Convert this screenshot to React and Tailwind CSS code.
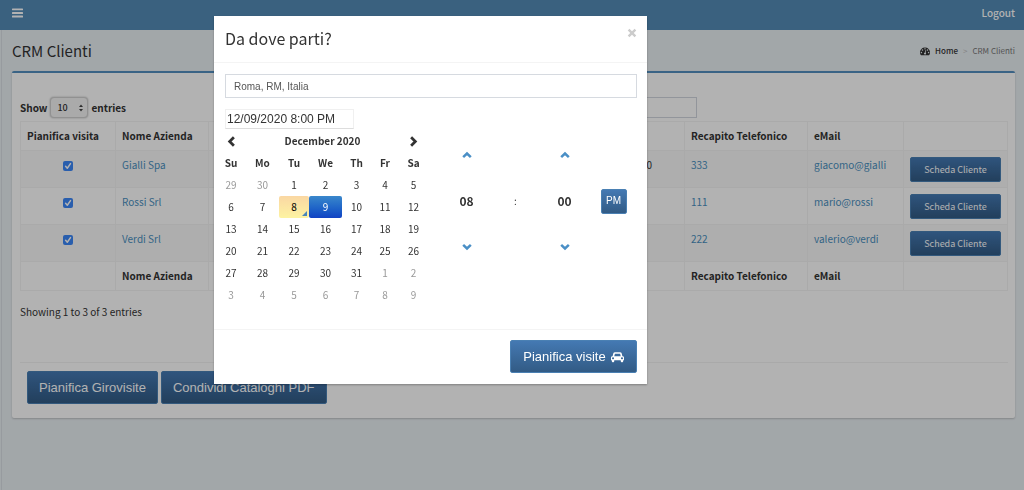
import React from "react";

const primary =
  "inline-flex items-center justify-center border border-[#4a80b3] bg-linear-to-b from-[#4479b3] to-[#325b85] text-white";

const clients = [
  { name: "Gialli Spa", extra: "0", phone: "333", email: "giacomo@gialli" },
  { name: "Rossi Srl", extra: "", phone: "111", email: "mario@rossi" },
  { name: "Verdi Srl", extra: "", phone: "222", email: "valerio@verdi" },
];

const weekDays = ["Su", "Mo", "Tu", "We", "Th", "Fr", "Sa"];

const weeks = [
  [29, 30, 1, 2, 3, 4, 5],
  [6, 7, 8, 9, 10, 11, 12],
  [13, 14, 15, 16, 17, 18, 19],
  [20, 21, 22, 23, 24, 25, 26],
  [27, 28, 29, 30, 31, 1, 2],
  [3, 4, 5, 6, 7, 8, 9],
];

function BarsIcon() {
  return (
    <svg viewBox="0 0 11 10" className="h-[10px] w-[11px]" fill="currentColor" aria-hidden="true">
      <rect x="0" y="0.4" width="11" height="1.9" rx="0.5" />
      <rect x="0" y="4" width="11" height="1.9" rx="0.5" />
      <rect x="0" y="7.6" width="11" height="1.9" rx="0.5" />
    </svg>
  );
}

function DashboardIcon() {
  return (
    <svg viewBox="0 0 1792 1792" className="size-[10px]" fill="currentColor" aria-hidden="true">
      <path d="M384 1152q0-53-37.5-90.5t-90.5-37.5-90.5 37.5-37.5 90.5 37.5 90.5 90.5 37.5 90.5-37.5 37.5-90.5zm192-448q0-53-37.5-90.5t-90.5-37.5-90.5 37.5-37.5 90.5 37.5 90.5 90.5 37.5 90.5-37.5 37.5-90.5zm428 481l101-382q6-26-7.5-48.5t-38.5-29.5-48 6.5-30 39.5l-101 382q-60 5-107 43.5t-63 98.5q-20 77 20 146t117 89 146-20 89-117q16-60-6-117t-72-91zm660-33q0-53-37.5-90.5t-90.5-37.5-90.5 37.5-37.5 90.5 37.5 90.5 90.5 37.5 90.5-37.5 37.5-90.5zm-640-640q0-53-37.5-90.5t-90.5-37.5-90.5 37.5-37.5 90.5 37.5 90.5 90.5 37.5 90.5-37.5 37.5-90.5zm448 192q0-53-37.5-90.5t-90.5-37.5-90.5 37.5-37.5 90.5 37.5 90.5 90.5 37.5 90.5-37.5 37.5-90.5zm320 448q0 261-141 483-19 29-54 29h-1402q-35 0-54-29-141-221-141-483 0-182 71-348t191-286 286-191 348-71 348 71 286 191 191 286 71 348z" />
    </svg>
  );
}

function CarIcon() {
  return (
    <svg viewBox="0 0 2048 1792" className="h-[12px] w-[13px]" fill="currentColor" aria-hidden="true">
      <path d="M480 1088q0-66-47-113t-113-47-113 47-47 113 47 113 113 47 113-47 47-113zm36-320h1016l-89-357q-2-8-14-17.5t-21-9.5h-768q-9 0-21 9.5t-14 17.5zm1372 320q0-66-47-113t-113-47-113 47-47 113 47 113 113 47 113-47 47-113zm160-96v384q0 14-9 23t-23 9h-96v128q0 80-56 136t-136 56-136-56-56-136v-128h-1024v128q0 80-56 136t-136 56-136-56-56-136v-128h-96q-14 0-23-9t-9-23v-384q0-93 65.5-158.5t158.5-65.5h28l105-419q23-94 104-157.5t179-63.5h768q98 0 179 63.5t104 157.5l105 419h28q93 0 158.5 65.5t65.5 158.5z" />
    </svg>
  );
}

function Chevron({ points, className }) {
  return (
    <svg viewBox="0 0 12 12" className={className} fill="none" stroke="currentColor" aria-hidden="true">
      <polyline points={points} strokeWidth="3" />
    </svg>
  );
}

function Check({ label }) {
  return (
    <span className="mt-[4px] inline-grid size-[10px] align-top">
      <input
        type="checkbox"
        defaultChecked
        aria-label={label}
        className="col-start-1 row-start-1 size-[10px] appearance-none rounded-xs bg-[#3c87f8]"
      />
      <svg viewBox="0 0 10 10" className="pointer-events-none col-start-1 row-start-1 size-[10px]" fill="none" stroke="white" aria-hidden="true">
        <path d="M2.6 5.3 4.3 7.2 7.5 2.6" strokeWidth="1.5" strokeLinecap="round" strokeLinejoin="round" />
      </svg>
    </span>
  );
}

function HeadingRow({ first }) {
  const cell = "border border-[#f4f4f4] px-[6px] py-0 text-left font-bold whitespace-nowrap";
  return (
    <tr className="h-[29px]">
      <th className={cell}>{first}</th>
      <th className={cell}>Nome Azienda</th>
      <th className={cell}></th>
      <th className={cell}>Recapito Telefonico</th>
      <th className={cell}>eMail</th>
      <th className={cell}></th>
    </tr>
  );
}

function ClientsTable() {
  const cell = "border border-[#f4f4f4] px-[6px] pt-[6px] pb-0 align-top";
  return (
    <table className="w-full table-fixed border-collapse">
      <colgroup>
        <col className="w-[95px]" />
        <col className="w-[93px]" />
        <col />
        <col className="w-[123px]" />
        <col className="w-[96px]" />
        <col className="w-[104px]" />
      </colgroup>
      <thead>
        <HeadingRow first="Pianifica visita" />
      </thead>
      <tbody>
        {clients.map((c) => (
          <tr key={c.name} className="h-[37px] odd:bg-[#f9f9f9]">
            <td className={`${cell} text-center`}>
              <Check label={`Pianifica visita ${c.name}`} />
            </td>
            <td className={cell}>
              <a href="#" className="text-[#4a8fc0]">{c.name}</a>
            </td>
            <td className="border border-[#f4f4f4] pt-[6px] pr-[32px] text-right align-top">{c.extra}</td>
            <td className={cell}>
              <a href="#" className="text-[#4a8fc0]">{c.phone}</a>
            </td>
            <td className={cell}>
              <a href="#" className="text-[#4a8fc0]">{c.email}</a>
            </td>
            <td className={cell}>
              <button type="button" className={`${primary} h-[25px] w-full rounded-xs text-[9px]`}>
                Scheda Cliente
              </button>
            </td>
          </tr>
        ))}
      </tbody>
      <tfoot>
        <HeadingRow first="" />
      </tfoot>
    </table>
  );
}

function dayClass(week, day) {
  if (week === 1 && day === 8)
    return "relative rounded-xs bg-linear-to-b from-[#fad7a3] to-[#fdf3a2] text-black";
  if (week === 1 && day === 9)
    return "rounded-xs bg-linear-to-b from-[#3a87cb] to-[#1242c4] text-white";
  if ((week === 0 && day > 20) || (week > 3 && day < 10)) return "text-[#999999]";
  return "";
}

function Calendar() {
  return (
    <table className="w-[212px] table-fixed border-separate border-spacing-0 text-center">
      <colgroup>
        <col className="w-[30px]" />
        <col className="w-[33px]" />
        <col className="w-[30px]" />
        <col className="w-[33px]" />
        <col className="w-[29px]" />
        <col className="w-[28px]" />
        <col className="w-[29px]" />
      </colgroup>
      <thead>
        <tr className="h-[22px]">
          <th className="p-0">
            <button type="button" aria-label="Previous month" className="block w-full">
              <Chevron points="8.6,1.4 4,6 8.6,10.6" className="mx-auto size-[11px]" />
            </button>
          </th>
          <th colSpan={5} className="p-0 font-bold">December 2020</th>
          <th className="p-0">
            <button type="button" aria-label="Next month" className="block w-full">
              <Chevron points="3.4,1.4 8,6 3.4,10.6" className="mx-auto size-[11px]" />
            </button>
          </th>
        </tr>
        <tr className="h-[22px]">
          {weekDays.map((d) => (
            <th key={d} className="p-0 font-bold">{d}</th>
          ))}
        </tr>
      </thead>
      <tbody>
        {weeks.map((days, w) => (
          <tr key={w} className="h-[22px]">
            {days.map((d) => (
              <td key={d} className={`p-0 ${dayClass(w, d)}`}>
                {d}
                {w === 1 && d === 8 && (
                  <span className="absolute right-[2px] bottom-[2px] border-b-[5px] border-l-[5px] border-b-[#4a86bb] border-l-transparent" />
                )}
              </td>
            ))}
          </tr>
        ))}
      </tbody>
    </table>
  );
}

function Arrow({ up, label }) {
  return (
    <button type="button" aria-label={label} className="text-[#4a8fc6]">
      <Chevron points={up ? "1.4,8.6 6,4.2 10.6,8.6" : "1.4,3.4 6,7.8 10.6,3.4"} className="size-[10px]" />
    </button>
  );
}

function TimePicker() {
  return (
    <div className="grid grid-cols-[repeat(4,49px)] grid-rows-[repeat(3,46px)] place-items-center pt-[2px]">
      <Arrow up label="Increment hour" />
      <span />
      <Arrow up label="Increment minute" />
      <span />
      <span className="text-[12px] font-bold">08</span>
      <span>:</span>
      <span className="text-[12px] font-bold">00</span>
      <button type="button" className={`${primary} h-[25px] w-[26px] rounded-xs font-['Liberation_Sans',sans-serif]`}>
        PM
      </button>
      <Arrow label="Decrement hour" />
      <span />
      <Arrow label="Decrement minute" />
      <span />
    </div>
  );
}

function Modal() {
  return (
    <div className="fixed inset-0 flex items-start bg-black/30 pt-[16px] pl-[214px]">
      <div role="dialog" aria-labelledby="dialog-title" className="w-full max-w-[433px] bg-white shadow-[0_1px_2px_rgba(0,0,0,0.3)]">
        <div className="flex h-[47px] items-start justify-between border-b border-[#f4f4f4] pr-[10px] pl-[11px]">
          <h4 id="dialog-title" className="pt-[10px] text-[16px] leading-[24px]">Da dove parti?</h4>
          <button type="button" aria-label="Close" className="mt-[12px] text-[#cccccc]">
            <svg viewBox="0 0 10 10" className="size-[10px]" stroke="currentColor" strokeWidth="2.4" aria-hidden="true">
              <path d="M1.6 1.6 8.4 8.4M8.4 1.6 1.6 8.4" />
            </svg>
          </button>
        </div>
        <div className="border-b border-[#f4f4f4] pt-[11px] pb-[23px]">
          <div className="flex flex-col items-start gap-[11px] pr-[10px] pl-[11px] font-['Liberation_Sans',sans-serif]">
            <input
              aria-label="Indirizzo di partenza"
              defaultValue="Roma, RM, Italia"
              className="h-[24px] w-full border border-[#d6dae0] px-[8px] text-[10px] text-[#555555]"
            />
            <input
              aria-label="Data e ora"
              defaultValue="12/09/2020 8:00 PM"
              className="h-[20px] w-[129px] border border-[#f0f0f0] border-b-[#dddddd] px-px text-[12px]"
            />
          </div>
          <div className="flex items-start gap-[14px] pt-px pl-[2px]">
            <Calendar />
            <TimePicker />
          </div>
        </div>
        <div className="flex justify-end pt-[10px] pr-[10px] pb-[11px]">
          <button type="button" className={`${primary} h-[33px] w-[127px] gap-[5px] rounded-xs font-['Liberation_Sans',sans-serif] text-[13px]`}>
            Pianifica visite
            <CarIcon />
          </button>
        </div>
      </div>
    </div>
  );
}

export default function App() {
  return (
    <div className="min-h-screen bg-[#e9eff3] font-['Noto_Sans_CJK_SC',sans-serif] text-[10px] leading-[16px] text-[#333333]">
      <header className="flex h-[30px] items-center justify-between bg-[#538bb6] pr-[9px] pl-[12px] text-white">
        <button type="button" aria-label="Toggle navigation" className="pb-[5px]">
          <BarsIcon />
        </button>
        <a href="#" className="pb-[5px] font-medium">Logout</a>
      </header>
      <main className="ml-px min-h-[calc(100vh-30px)] border-l border-[#d9dfe4] pr-[9px] pl-[10px]">
        <div className="flex h-[41px] items-center justify-between">
          <h1 className="text-[15px] leading-[24px]">CRM Clienti</h1>
          <nav className="flex items-center gap-[5px] text-[8px]">
            <DashboardIcon />
            <a href="#" className="font-medium">Home</a>
            <span className="text-[#bbbbbb]">&gt;</span>
            <span className="text-[#777777]">CRM Clienti</span>
          </nav>
        </div>
        <section className="rounded-xs border-t-2 border-[#538fbf] bg-white pt-[24px] pr-[7px] pb-[14px] pl-[8px] shadow-[0_1px_2px_rgba(0,0,0,0.2)]">
          <div className="flex items-center justify-between pb-[3px]">
            <label className="flex items-center gap-[3px] font-bold">
              Show
              <span className="inline-grid items-center">
                <select className="col-start-1 row-start-1 h-[21px] w-[38px] appearance-none rounded-sm border border-[#d0d0d0] bg-[#f4f4f4] pl-[6px] text-[9px] font-medium shadow-[0_0_2px_rgba(0,0,0,0.3)]">
                  <option>10</option>
                </select>
                <svg viewBox="0 0 6 8" className="pointer-events-none col-start-1 row-start-1 mr-[4px] h-[8px] w-[6px] justify-self-end" fill="#444444" aria-hidden="true">
                  <path d="M3 0.4 5 3.1H1zM3 7.6 5 4.9H1z" />
                </svg>
              </span>
              entries
            </label>
            <input aria-label="Search" className="mr-[311px] h-[21px] w-[160px] border border-[#d2d6de]" />
          </div>
          <ClientsTable />
          <p className="pt-[13px] pb-[42px]">Showing 1 to 3 of 3 entries</p>
          <div className="flex gap-[3px] border-t border-[#f2f2f2] pt-[8px] pl-[7px] font-['Liberation_Sans',sans-serif] text-[13px]">
            <button type="button" className={`${primary} h-[33px] rounded-xs px-[11px]`}>Pianifica Girovisite</button>
            <button type="button" className={`${primary} h-[33px] rounded-xs px-[11px]`}>Condividi Cataloghi PDF</button>
          </div>
        </section>
      </main>
      <Modal />
    </div>
  );
}
